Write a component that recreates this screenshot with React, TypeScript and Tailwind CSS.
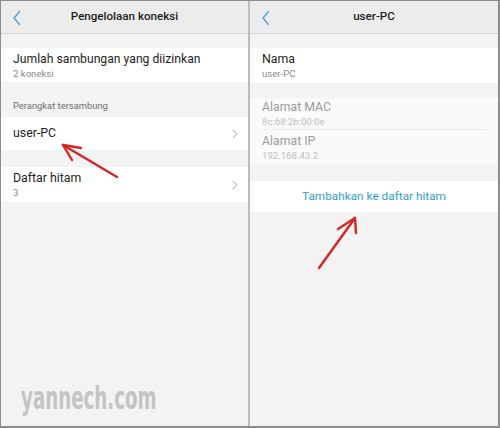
import React from "react";

function BackIcon() {
  return (
    <svg width="10" height="16" viewBox="0 0 10 16" fill="none">
      <path d="M7.5 1.5 L2 8 L7.5 14.5" stroke="#4a9fd6" strokeWidth="1.3" strokeLinecap="round" strokeLinejoin="round" />
    </svg>
  );
}

function Chevron() {
  return (
    <svg width="6" height="10" viewBox="0 0 6 10" fill="none">
      <path d="M1 1 L5 5 L1 9" stroke="#c4c4c4" strokeWidth="1.1" strokeLinecap="round" strokeLinejoin="round" />
    </svg>
  );
}

function Header({ title }: { title: string }) {
  return (
    <div className="relative flex h-[33px] items-center justify-center border-b border-[#d5d5d5] bg-[#ececec]">
      <div className="absolute left-[11px] top-[9px]">
        <BackIcon />
      </div>
      <span className="text-[11.6px] font-medium text-[#1c1c1c]">{title}</span>
    </div>
  );
}

export default function App() {
  return (
    <div
      className="relative flex h-[428px] w-[500px] border-l border-t border-r-2 border-b-2 border-[#8c8c8c] bg-[#f3f3f3]"
      style={{ fontFamily: "Roboto, 'Noto Sans', sans-serif" }}
    >
      {/* left panel */}
      <div className="flex w-[247px] flex-col">
        <Header title="Pengelolaan koneksi" />
        <div className="mt-[14px] flex h-[34px] flex-col justify-center bg-white px-3">
          <div className="text-[12.2px] leading-[16px] text-[#1e1e1e]">Jumlah sambungan yang diizinkan</div>
          <div className="text-[9.6px] leading-[13px] text-[#8a8a8a]">2 koneksi</div>
        </div>
        <div className="flex h-[35px] items-end px-3 pb-[4px] text-[9.4px] text-[#6e6e6e]">Perangkat tersambung</div>
        <div className="flex h-[33px] items-center justify-between bg-white pl-3 pr-[10px]">
          <span className="text-[12.3px] text-[#1e1e1e]">user-PC</span>
          <Chevron />
        </div>
        <div className="mt-[17px] flex h-[35px] items-center justify-between bg-white pl-3 pr-[10px]">
          <div className="flex flex-col">
            <span className="text-[12.3px] leading-[16px] text-[#1e1e1e]">Daftar hitam</span>
            <span className="text-[9.6px] leading-[13px] text-[#8a8a8a]">3</span>
          </div>
          <Chevron />
        </div>
      </div>

      <div className="w-[2px] bg-[#bdbdbd]" />

      {/* right panel */}
      <div className="flex flex-1 flex-col">
        <Header title="user-PC" />
        <div className="mt-[14px] flex h-[35px] flex-col justify-center bg-white px-3">
          <div className="text-[12.3px] leading-[16px] text-[#1e1e1e]">Nama</div>
          <div className="text-[9.6px] leading-[13px] text-[#8a8a8a]">user-PC</div>
        </div>
        <div className="mt-[15px] flex flex-col bg-[#fafafa] px-3">
          <div className="flex h-[32px] flex-col justify-center border-b border-[#e6e6e6]">
            <div className="text-[12.3px] leading-[16px] text-[#9a9a9a]">Alamat MAC</div>
            <div className="text-[9.6px] leading-[13px] text-[#bdbdbd]">8c:68:2b:00:0e</div>
          </div>
          <div className="flex h-[34px] flex-col justify-center">
            <div className="text-[12.3px] leading-[16px] text-[#9a9a9a]">Alamat IP</div>
            <div className="text-[9.6px] leading-[13px] text-[#bdbdbd]">192.168.43.2</div>
          </div>
        </div>
        <div className="mt-[17px] flex h-[31px] items-center justify-center bg-white text-[11.8px] text-[#34a0cc]">
          Tambahkan ke daftar hitam
        </div>
      </div>

      {/* watermark */}
      <div
        className="absolute left-[20px] top-[373px] origin-left scale-x-[0.57] text-[32px] font-bold text-[#c4c4c4]"
        style={{ fontFamily: "'DejaVu Sans', sans-serif" }}
      >
        yannech.com
      </div>

      {/* annotation arrows */}
      <svg className="pointer-events-none absolute left-0 top-0" width="500" height="428">
        <g stroke="#d42424" strokeWidth="2.4" strokeLinecap="round" fill="none">
          <path d="M116 176 L62 144" />
          <path d="M62 144 L80 147" />
          <path d="M62 144 L71 159" />
          <path d="M318 267 L354 217" />
          <path d="M354 217 L337 228" />
          <path d="M354 217 L355 232" />
        </g>
      </svg>
    </div>
  );
}
